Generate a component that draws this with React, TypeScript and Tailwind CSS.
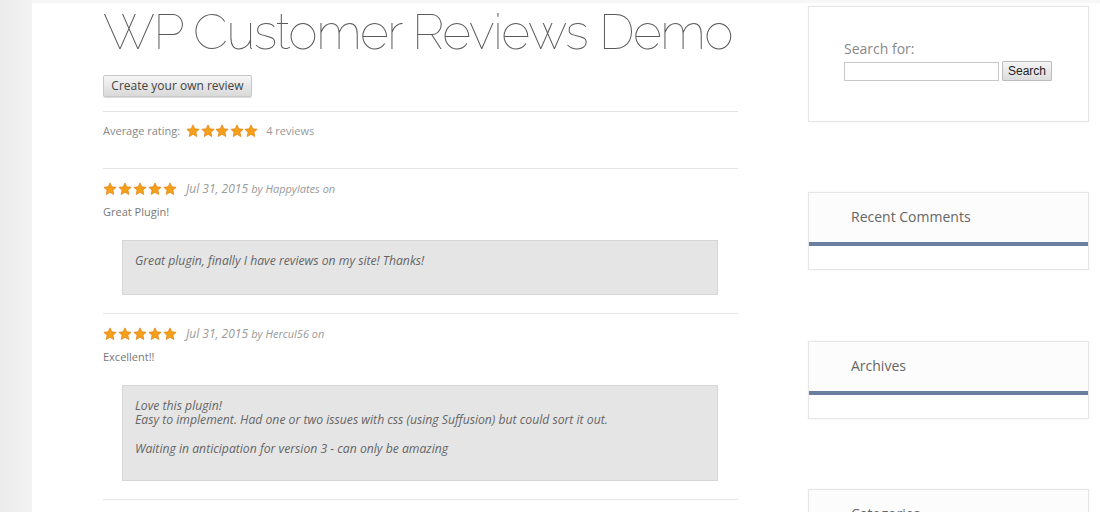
import React from "react";

const Star = () => (
  <svg width="14" height="14" viewBox="0 0 24 24" className="block">
    <polygon
      points="12,1.5 15.1,8.3 22.5,9.1 17,14.1 18.5,21.5 12,17.7 5.5,21.5 7,14.1 1.5,9.1 8.9,8.3"
      fill="#f5a01a"
      stroke="#e07d0a"
      strokeWidth="1.2"
      strokeLinejoin="round"
    />
  </svg>
);

const Stars = ({ wide }: { wide?: boolean }) => (
  <div className={wide ? "flex gap-[1px]" : "flex gap-[0.5px]"}>
    <Star />
    <Star />
    <Star />
    <Star />
    <Star />
  </div>
);

const Review = ({
  date,
  author,
  title,
  children,
}: {
  date: string;
  author: string;
  title: string;
  children: React.ReactNode;
}) => (
  <div className="border-b border-[#e6e6e6] pb-[18px]">
    <div className="flex items-center gap-[9px] pt-[13px] h-[27px]">
      <Stars wide />
      <span className="text-[12px] italic text-[#999]">
        {date} <span className="text-[11px]">by {author} on</span>
      </span>
    </div>
    <div className="text-[11px] text-[#777] mt-[9px] leading-[14px]">{title}</div>
    <div className="ml-[19px] mr-[20px] mt-[21px] bg-[#e5e5e5] border border-[#d6d6d6] px-[12px] pt-[12px] text-[12.2px] italic text-[#666] leading-[15px]">
      {children}
    </div>
  </div>
);

const Widget = ({ title, top }: { title: string; top: string }) => (
  <div className={`${top} border border-[#e6e6e6] shadow-[0_0_2px_rgba(0,0,0,0.06)] bg-white`}>
    <div className="h-[49px] pl-[42px] pt-[15px] text-[14px] text-[#666] bg-[#fcfcfc] leading-[18px]">
      {title}
    </div>
    <div className="h-[4px] bg-[#6b7fa0]" />
    <div className="h-[23px]" />
  </div>
);

export default function App() {
  return (
    <div
      className="flex h-[512px] w-[1100px] overflow-hidden bg-white"
      style={{ fontFamily: '"Open Sans", "Noto Sans", sans-serif' }}
    >
      <div className="w-[32px] shrink-0 bg-gradient-to-r from-[#ececec] to-[#f2f2f2]" />
      <div className="flex flex-1 border-t-[3px] border-[#f7f7f7]">
        <div className="ml-[71px] w-[635px] shrink-0">
          <h1
            className="text-[50px] font-thin leading-[60px] text-[#5a5a5a] tracking-[-1.5px] -mt-[1px] whitespace-nowrap"
            style={{ fontFamily: 'Raleway, Lato, "Open Sans", sans-serif' }}
          >
            WP Customer Reviews Demo
          </h1>
          <button className="mt-[13px] h-[22px] w-[149px] rounded-[2px] border border-[#c8c8c8] bg-gradient-to-b from-[#f6f6f6] to-[#d9d9d9] text-[12px] text-[#444] shadow-[0_1px_1px_rgba(0,0,0,0.15)]">
            Create your own review
          </button>
          <div className="mt-[14px] border-t border-[#e3e3e3]" />
          <div className="flex items-start h-[57px] border-b border-[#e6e6e6] pt-[11px]">
            <span className="text-[11px] text-[#888] leading-[16px]">Average rating:</span>
            <span className="ml-[6px] mt-[1px]">
              <Stars />
            </span>
            <span className="ml-[8px] text-[11px] text-[#999] leading-[16px]">4 reviews</span>
          </div>
          <Review date="Jul 31, 2015" author="Happylates" title="Great Plugin!">
            <div className="h-[41px]">Great plugin, finally I have reviews on my site! Thanks!</div>
          </Review>
          <Review date="Jul 31, 2015" author="Hercul56" title="Excellent!!">
            <div className="h-[82px]">
              <div className="h-[14px]">Love this plugin!</div>
              <div className="h-[14px]">Easy to implement. Had one or two issues with css (using Suffusion) but could sort it out.</div>
              <div className="mt-[15px]">Waiting in anticipation for version 3 - can only be amazing</div>
            </div>
          </Review>
        </div>
        <div className="ml-[70px] w-[281px] shrink-0 pt-[3px]">
          <div className="h-[116px] border border-[#e6e6e6] shadow-[0_0_2px_rgba(0,0,0,0.06)] pl-[35px] pt-[33px]">
            <div className="text-[14px] text-[#888] leading-[18px]">Search for:</div>
            <div className="flex items-center gap-[3px] mt-[3px]">
              <input className="h-[19px] w-[155px] border border-[#c9c9c9] bg-white" />
              <button
                className="h-[20px] px-[5px] border border-[#bbb] rounded-[1px] bg-gradient-to-b from-[#f5f5f5] to-[#dddddd] text-[12px] text-[#222] leading-[16px]"
                style={{ fontFamily: '"Liberation Sans", Arial, sans-serif' }}
              >
                Search
              </button>
            </div>
          </div>
          <Widget title="Recent Comments" top="mt-[70px]" />
          <Widget title="Archives" top="mt-[71px]" />
          <Widget title="Categories" top="mt-[70px]" />
        </div>
      </div>
    </div>
  );
}
